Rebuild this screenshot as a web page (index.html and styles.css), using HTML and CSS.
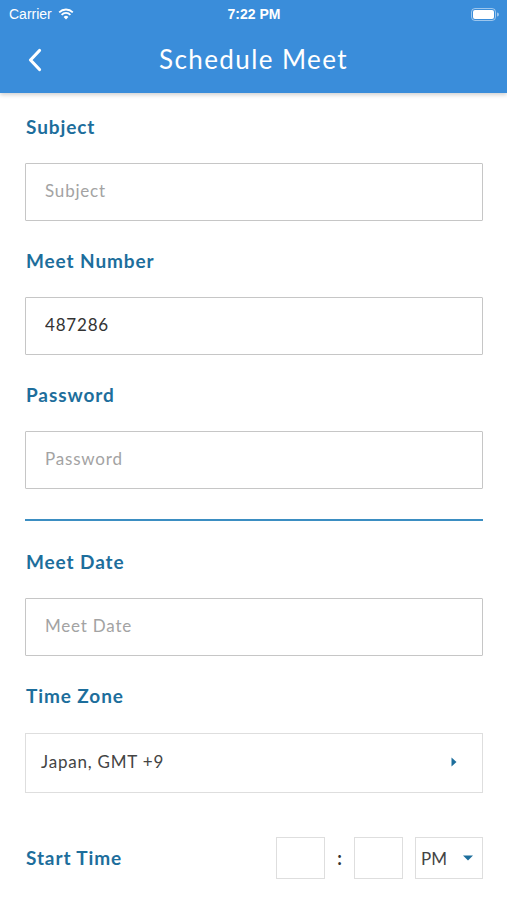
FILE: index.html
```html
<!DOCTYPE html>
<html lang="en">
<head>
    <meta charset="UTF-8">
    <meta name="viewport" content="width=device-width, initial-scale=1.0">
    <title>Schedule Meet</title>
    <link rel="stylesheet" href="styles.css">
</head>
<body>
    <header class="top">
        <div class="status-bar">
            <div class="status-left">
                Carrier
                <svg class="wifi" width="16" height="12" viewBox="0 0 16 12">
                    <path d="M8 11.5 L5.6 8.9 A3.4 3.4 0 0 1 10.4 8.9 Z" fill="#fff"/>
                    <path d="M3.6 6.8 A6.2 6.2 0 0 1 12.4 6.8" stroke="#fff" stroke-width="1.8" fill="none"/>
                    <path d="M1.2 4.3 A9.6 9.6 0 0 1 14.8 4.3" stroke="#fff" stroke-width="1.8" fill="none"/>
                </svg>
            </div>
            <div class="status-time">7:22 PM</div>
            <div class="status-right">
                <svg width="28" height="13" viewBox="0 0 28 13">
                    <rect x="0.5" y="0.5" width="24" height="12" rx="3.5" fill="none" stroke="#fff" stroke-opacity="0.5"/>
                    <rect x="2" y="2" width="21" height="9" rx="2" fill="#fff"/>
                    <path d="M26 4.5 v4 a2 2 0 0 0 0 -4z" fill="#fff" fill-opacity="0.5"/>
                </svg>
            </div>
        </div>
        <nav class="nav-bar">
            <svg class="back" width="16" height="24" viewBox="0 0 16 24">
                <path d="M12.5 2.5 L3.5 12 L12.5 21.5" stroke="#fff" stroke-width="3.2" fill="none" stroke-linecap="round" stroke-linejoin="round"/>
            </svg>
            <h1>Schedule Meet</h1>
        </nav>
    </header>

    <main class="form">
        <div class="field">
            <label for="subject">Subject</label>
            <input type="text" id="subject" placeholder="Subject">
        </div>
        <div class="field">
            <label for="meetNumber">Meet Number</label>
            <input type="text" id="meetNumber" value="487286">
        </div>
        <div class="field last">
            <label for="password">Password</label>
            <input type="text" id="password" placeholder="Password">
        </div>

        <hr class="divider">

        <div class="field">
            <label for="meetDate">Meet Date</label>
            <input type="text" id="meetDate" placeholder="Meet Date">
        </div>
        <div class="field">
            <label>Time Zone</label>
            <div class="select-box">
                <span>Japan, GMT +9</span>
                <svg width="8" height="12" viewBox="0 0 8 12"><path d="M1.5 1.5 L6.5 6 L1.5 10.5 Z" fill="#1d6e9c"/></svg>
            </div>
        </div>

        <div class="time-row">
            <label>Start Time</label>
            <div class="time-inputs">
                <div class="time-box"></div>
                <span class="colon">:</span>
                <div class="time-box"></div>
                <div class="ampm">
                    <span>PM</span>
                    <svg width="12" height="8" viewBox="0 0 12 8"><path d="M1 1.5 L11 1.5 L6 6.5 Z" fill="#1d6e9c"/></svg>
                </div>
            </div>
        </div>
    </main>
</body>
</html>
```

FILE: styles.css
```css
body {
    margin: 0;
    padding: 0;
    background: #fff;
    font-family: Lato, "Open Sans", sans-serif;
    color: #333;
}
.top {
    background-color: #3a8dda;
    box-shadow: 0 2px 4px rgba(0, 0, 0, 0.18);
    color: #fff;
}
.status-bar {
    height: 28px;
    display: flex;
    align-items: center;
    justify-content: space-between;
    padding: 0 8px 0 9px;
    font-family: "Liberation Sans", Arial, sans-serif;
    font-size: 14px;
}
.status-left {
    display: flex;
    align-items: center;
    gap: 6px;
    width: 120px;
}
.status-time {
    font-weight: bold;
    font-size: 14px;
}
.status-right {
    width: 120px;
    display: flex;
    justify-content: flex-end;
}
.nav-bar {
    height: 65px;
    position: relative;
    display: flex;
    align-items: center;
    justify-content: center;
}
.nav-bar .back {
    position: absolute;
    left: 27px;
    top: 20px;
}
.nav-bar h1 {
    margin: 0;
    font-size: 26px;
    font-weight: normal;
    letter-spacing: 1.4px;
    padding-bottom: 4px;
}
.form {
    padding: 22px 24px 0 25px;
}
.field {
    display: flex;
    flex-direction: column;
    margin-bottom: 28px;
}
.field.last {
    margin-bottom: 0;
}
.field label, .time-row label {
    font-size: 19px;
    line-height: 24px;
    color: #1d6e9c;
    font-weight: bold;
    letter-spacing: 0.9px;
    margin-left: 1px;
}
.field input {
    margin-top: 24px;
    height: 58px;
    box-sizing: border-box;
    border: 1.5px solid #c6c6c6;
    border-radius: 1px;
    padding: 0 19px 3px;
    font-family: inherit;
    font-size: 17px;
    letter-spacing: 0.8px;
    color: #333;
    outline: none;
}
.field input::placeholder {
    color: #a3a3a3;
}
.divider {
    border: none;
    height: 2px;
    background: #3b8ec2;
    margin: 30px 0 29px;
}
.select-box {
    margin-top: 25px;
    height: 60px;
    box-sizing: border-box;
    border: 1.5px solid #dedede;
    display: flex;
    align-items: center;
    justify-content: space-between;
    padding: 0 24px 3px 15px;
    font-size: 17px;
    letter-spacing: 0.8px;
    color: #444;
}
.time-row {
    margin-top: 44px;
    display: flex;
    align-items: center;
    justify-content: space-between;
}
.time-inputs {
    display: flex;
    align-items: center;
}
.time-box {
    width: 49px;
    height: 42px;
    box-sizing: border-box;
    border: 1.5px solid #dedede;
}
.colon {
    width: 29px;
    text-align: center;
    font-size: 18px;
    font-weight: bold;
    color: #333;
}
.ampm {
    margin-left: 12px;
    width: 68px;
    height: 42px;
    box-sizing: border-box;
    border: 1.5px solid #dedede;
    display: flex;
    align-items: center;
    justify-content: space-between;
    padding: 0 8px 0 5px;
    font-size: 17px;
    color: #444;
}
```
